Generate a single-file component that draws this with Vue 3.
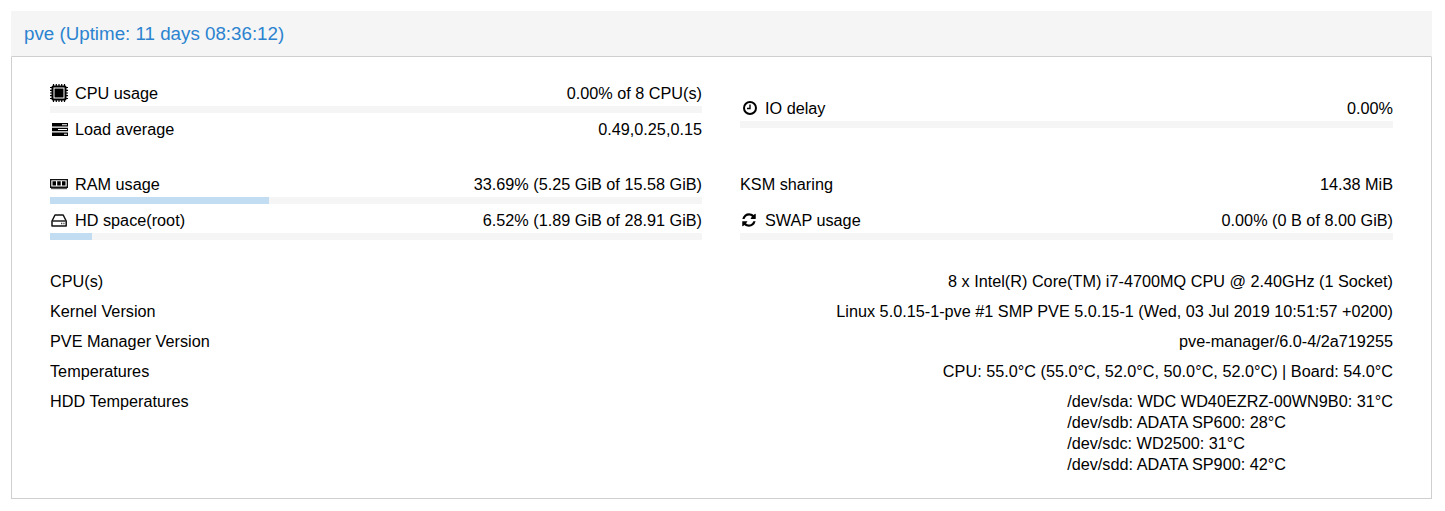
<script setup>
const details = [
  { label: 'CPU(s)', value: ['8 x Intel(R) Core(TM) i7-4700MQ CPU @ 2.40GHz (1 Socket)'] },
  { label: 'Kernel Version', value: ['Linux 5.0.15-1-pve #1 SMP PVE 5.0.15-1 (Wed, 03 Jul 2019 10:51:57 +0200)'] },
  { label: 'PVE Manager Version', value: ['pve-manager/6.0-4/2a719255'] },
  { label: 'Temperatures', value: ['CPU: 55.0°C (55.0°C, 52.0°C, 50.0°C, 52.0°C) | Board: 54.0°C'] },
  {
    label: 'HDD Temperatures',
    value: [
      '/dev/sda: WDC WD40EZRZ-00WN9B0: 31°C',
      '/dev/sdb: ADATA SP600: 28°C',
      '/dev/sdc: WD2500: 31°C',
      '/dev/sdd: ADATA SP900: 42°C'
    ]
  }
];
</script>

<template>
  <div class="page">
    <section class="panel">
      <header class="panel-head">pve (Uptime: 11 days 08:36:12)</header>
      <div class="panel-body">
        <div class="stats">
          <!-- CPU / load -->
          <div class="group">
            <div class="stat">
              <div class="line">
                <span class="name">
                  <svg class="icon" viewBox="0 0 18 18">
                    <rect x="1.500" y="1.500" width="15" height="15" rx="1.500" fill="#000" />
                    <rect x="3.500" y="3.500" width="11" height="11" fill="#fff" />
                    <rect x="4.500" y="4.500" width="9" height="9" fill="#000" />
                    <path d="M3.500 0v18M6.300 0v18M9 0v18M11.700 0v18M14.500 0v18M0 3.500h18M0 6.300h18M0 9h18M0 11.700h18M0 14.500h18" stroke="#000" stroke-width="1.200" stroke-dasharray="2 14 2" fill="none" />
                  </svg>
                  CPU usage
                </span>
                <span>0.00% of 8 CPU(s)</span>
              </div>
              <div class="bar"></div>
            </div>
            <div class="stat no-bar">
              <div class="line">
                <span class="name">
                  <svg class="icon" viewBox="0 0 18 18">
                    <path d="M2 3h16v3.500H2zM2 7.800h16v3.500H2zM2 12.600h16v3.500H2z" fill="#000" />
                    <path d="M12 4.300h5v1h-5zM8 9h9v1H8zM14 13.800h3v1h-3z" fill="#fff" />
                  </svg>
                  Load average
                </span>
                <span>0.49,0.25,0.15</span>
              </div>
            </div>
          </div>
          <div class="group centered">
            <div class="stat">
              <div class="line">
                <span class="name">
                  <svg class="icon" viewBox="0 0 18 18">
                    <circle cx="10" cy="9" r="6" fill="none" stroke="#000" stroke-width="2" />
                    <path d="M10 5.500V9.500H7" fill="none" stroke="#000" stroke-width="1.400" />
                  </svg>
                  IO delay
                </span>
                <span>0.00%</span>
              </div>
              <div class="bar"></div>
            </div>
          </div>

          <!-- memory / disk -->
          <div class="group">
            <div class="stat">
              <div class="line">
                <span class="name">
                  <svg class="icon" viewBox="0 0 18 18">
                    <path d="M0 4h18v9H0z" fill="#111" />
                    <path d="M1.300 5.300h15.400v6.200H1.300z" fill="#fff" />
                    <path d="M2.500 6.300h3.500v4.200H2.500zM7.200 6.300h3.500v4.200H7.200zM12 6.300h3.500v4.200H12z" fill="#000" />
                    <path d="M1 13h16v1.200H1z" fill="#555" />
                  </svg>
                  RAM usage
                </span>
                <span>33.69% (5.25 GiB of 15.58 GiB)</span>
              </div>
              <div class="bar"><div class="fill" :style="{ width: '33.6%' }"></div></div>
            </div>
            <div class="stat">
              <div class="line">
                <span class="name">
                  <svg class="icon" viewBox="0 0 18 18">
                    <path d="M5 4h8.200l3 6v5H2v-5z" fill="none" stroke="#111" stroke-width="1.500" stroke-linejoin="round" />
                    <path d="M2.500 10h13" stroke="#111" stroke-width="1.400" />
                    <path d="M11 12.500h1.300M13.300 12.500h1.200" stroke="#444" stroke-width="1.300" />
                  </svg>
                  HD space(root)
                </span>
                <span>6.52% (1.89 GiB of 28.91 GiB)</span>
              </div>
              <div class="bar"><div class="fill" :style="{ width: '6.45%' }"></div></div>
            </div>
          </div>
          <div class="group">
            <div class="stat no-bar-tall">
              <div class="line">
                <span>KSM sharing</span>
                <span>14.38 MiB</span>
              </div>
            </div>
            <div class="stat">
              <div class="line">
                <span class="name">
                  <svg class="icon" viewBox="-216 -256 1968 2048">
                    <path d="M1511 928q0 5-1 7-64 268-268 434.500t-478 166.500q-146 0-282.500-55t-243.500-157l-129 129q-19 19-45 19t-45-19-19-45v-448q0-26 19-45t45-19h448q26 0 45 19t19 45-19 45l-137 137q71 66 161 102t187 36q134 0 250-65t186-179q11-17 53-117 8-23 30-23h192q13 0 22.500 9.500t9.500 22.500zm25-800v448q0 26-19 45t-45 19h-448q-26 0-45-19t-19-45 19-45l138-138q-148-137-349-137-134 0-250 65t-186 179q-11 17-53 117-8 23-30 23h-199q-13 0-22.500-9.500t-9.500-22.500v-7q65-268 270-434.500t480-166.500q146 0 284 55.500t245 156.500l130-129q19-19 45-19t45 19 19 45z" fill="#000" />
                  </svg>
                  SWAP usage
                </span>
                <span>0.00% (0 B of 8.00 GiB)</span>
              </div>
              <div class="bar"></div>
            </div>
          </div>
        </div>

        <div class="details">
          <div v-for="row in details" :key="row.label" class="detail">
            <span>{{ row.label }}</span>
            <div class="detail-value">
              <div v-for="text in row.value" :key="text">{{ text }}</div>
            </div>
          </div>
        </div>
      </div>
    </section>
  </div>
</template>

<style>
html, body {
  margin: 0;
  background: #fff;
}
</style>

<style scoped>
.page {
  padding: 11px 13px 12px 11px;
  font-family: "Liberation Sans", Arial, sans-serif;
  font-size: 16.24px;
  color: #000;
}

.panel-head {
  height: 46px;
  line-height: 43px;
  padding-left: 12px;
  background: #f5f5f5;
  border: 1px solid #f5f5f5;
  border-bottom: 1px solid #cfcfcf;
  box-sizing: border-box;
  font-size: 18.76px;
  color: #2b83d0;
}

.panel-body {
  border: 1px solid #cfcfcf;
  border-top: 0;
  padding: 26px 38px 19px;
}

.stats {
  display: grid;
  grid-template-columns: 652px 1fr;
  column-gap: 38px;
  row-gap: 31px;
}

.group {
  display: flex;
  flex-direction: column;
  gap: 6px;
}

.group.centered {
  justify-content: center;
}

.stat {
  height: 30px;
}

.stat.no-bar {
  height: 24px;
}

.stat.no-bar-tall {
  height: 30px;
}

.line {
  display: flex;
  justify-content: space-between;
  height: 20px;
  line-height: 20px;
  margin-bottom: 3px;
}

.name {
  display: flex;
  align-items: center;
}

.icon {
  width: 18px;
  height: 18px;
  margin-right: 7px;
  flex: none;
}

.bar {
  height: 7px;
  background: #f5f5f5;
}

.fill {
  height: 100%;
  background: #c2dcf2;
}

.details {
  margin-top: 26px;
}

.detail {
  display: flex;
  justify-content: space-between;
  padding: 4.500px 0;
  line-height: 21px;
}

.detail-value {
  text-align: left;
}
</style>
